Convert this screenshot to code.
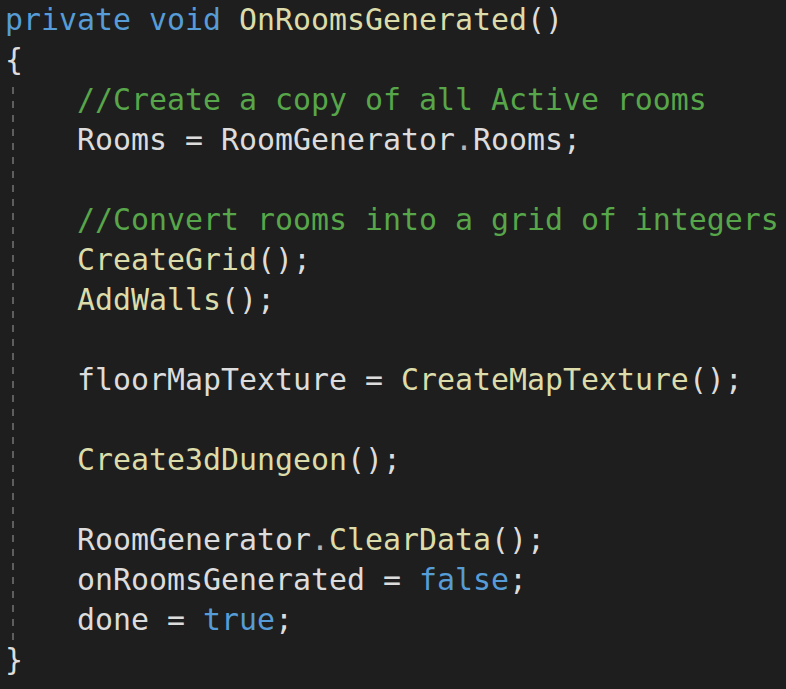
import React from "react";

const K = ({ children }) => <span className="text-[#569cd6]">{children}</span>;
const M = ({ children }) => <span className="text-[#dcdcaa]">{children}</span>;
const C = ({ children }) => <span className="text-[#57a64a]">{children}</span>;
const D = ({ children }) => <span className="text-[#b4b4b4]">{children}</span>;

const Line = ({ children }) => (
  <div className="h-[40px] whitespace-pre">{children === undefined ? " " : children}</div>
);

export default function App() {
  return (
    <div
      className="w-[786px] h-[689px] overflow-hidden bg-[#1e1e1e] text-[#dcdcdc] pl-[5px] text-[29.9px] leading-[40px]"
      style={{ fontFamily: '"DejaVu Sans Mono", "Liberation Mono", monospace' }}
    >
      <Line>
        <K>private</K> <K>void</K> <M>OnRoomsGenerated</M>()
      </Line>
      <Line>{"{"}</Line>
      <div className="relative">
        <div className="absolute left-[7px] top-[7px] w-[2px] h-[556px] bg-[repeating-linear-gradient(to_bottom,#5e5e5e_0_7px,transparent_7px_14px)]" />
        <div className="pl-[72px]">
          <Line><C>//Create a copy of all Active rooms</C></Line>
          <Line>Rooms = RoomGenerator<D>.</D>Rooms;</Line>
          <Line />
          <Line><C>//Convert rooms into a grid of integers</C></Line>
          <Line><M>CreateGrid</M>();</Line>
          <Line><M>AddWalls</M>();</Line>
          <Line />
          <Line>floorMapTexture = <M>CreateMapTexture</M>();</Line>
          <Line />
          <Line><M>Create3dDungeon</M>();</Line>
          <Line />
          <Line>RoomGenerator<D>.</D><M>ClearData</M>();</Line>
          <Line>onRoomsGenerated = <K>false</K>;</Line>
          <Line>done = <K>true</K>;</Line>
        </div>
      </div>
      <Line>{"}"}</Line>
    </div>
  );
}
